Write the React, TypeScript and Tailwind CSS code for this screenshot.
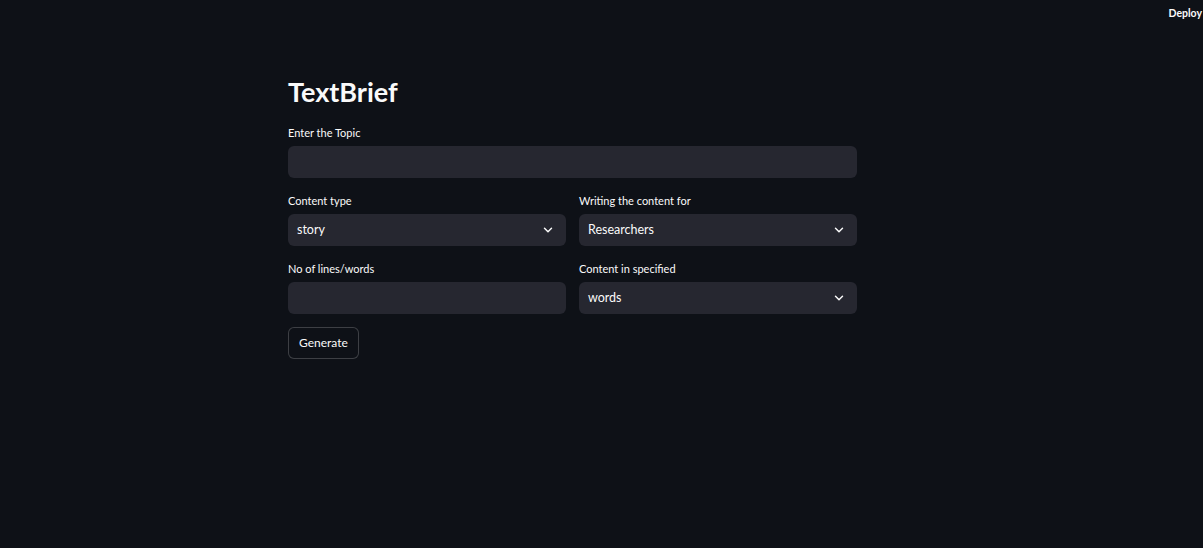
import { ChevronDown } from 'lucide-react'

function Label({ children }: { children: React.ReactNode }) {
  return <div className="mb-[6px] h-[14px] text-[11px] leading-[14px] text-[#fafafa]">{children}</div>
}

function Select({ value }: { value: string }) {
  return (
    <div className="flex h-[32px] items-center justify-between rounded-[6px] bg-[#262730] pl-[9px] pr-[11px]">
      <span className="text-[12.5px] text-[#fafafa]">{value}</span>
      <ChevronDown size={14} strokeWidth={2.5} className="text-[#fafafa]" />
    </div>
  )
}

function Input() {
  return <div className="h-[32px] rounded-[6px] bg-[#262730]" />
}

export default function App() {
  return (
    <div
      className="relative h-[548px] w-full bg-[#0e1117] text-[#fafafa]"
      style={{ fontFamily: 'Lato, "Liberation Sans", sans-serif' }}
    >
      <div className="absolute right-[1px] top-[6px] text-[10.5px] font-bold">Deploy</div>
      <div className="ml-[288px] w-[569px] pt-[75px]">
        <h1 className="mb-[17px] text-[27px] font-bold leading-[34px]">TextBrief</h1>
        <Label>Enter the Topic</Label>
        <Input />
        <div className="mt-[16px] grid grid-cols-2 gap-x-[13px] gap-y-[16px]">
          <div>
            <Label>Content type</Label>
            <Select value="story" />
          </div>
          <div>
            <Label>Writing the content for</Label>
            <Select value="Researchers" />
          </div>
          <div>
            <Label>No of lines/words</Label>
            <Input />
          </div>
          <div>
            <Label>Content in specified</Label>
            <Select value="words" />
          </div>
        </div>
        <button className="mt-[13px] h-[32px] rounded-[6px] border border-[#fafafa]/20 bg-[#0e1117] px-[10px] text-[12px] text-[#fafafa]">
          Generate
        </button>
      </div>
    </div>
  )
}
